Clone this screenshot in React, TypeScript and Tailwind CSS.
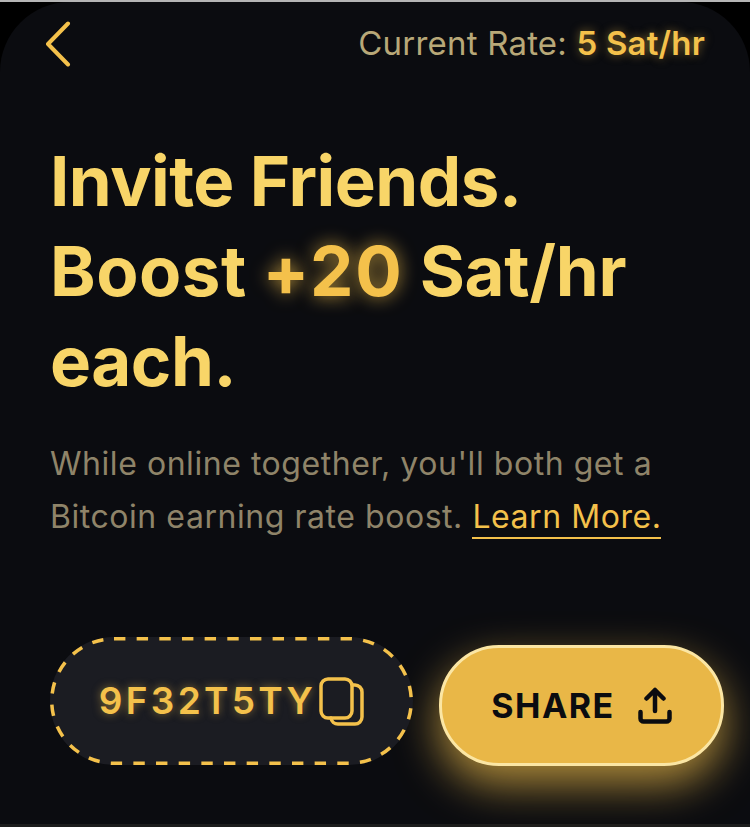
export default function App() {
  return (
    <div className="h-[827px] w-[750px] overflow-hidden bg-black font-['Inter',sans-serif]">
      <div className="h-[2px] bg-[#b5b5b5]" />
      <div className="flex h-[822px] flex-col rounded-t-[70px] bg-[#0b0c10] pl-[50px] pr-[26px]">
        {/* Top bar */}
        <div className="flex h-[84px] items-center justify-between pr-[19px]">
          <svg className="-ml-[5px]" width="26" height="46" viewBox="0 0 26 46" fill="none">
            <path d="M23 2.500 3 23l20 20.500" stroke="#f4c14b" strokeWidth="4" strokeLinecap="round" strokeLinejoin="round" />
          </svg>
          <p className="text-[33px] tracking-[0.2px] text-[#b8a878]">
            Current Rate:{" "}
            <span className="font-semibold text-[#f4c14b] [text-shadow:0_0_10px_rgba(244,193,75,0.5)]">5 Sat/hr</span>
          </p>
        </div>

        {/* Headline */}
        <h1 className="mt-[50px] text-[69px] leading-[90px] font-bold tracking-[-0.5px] text-[#f8d568]">
          Invite Friends.
          <br />
          <span className="tracking-[0.5px]">Boost</span>{" "}
          <span className="tracking-[2px] text-[#f4c14b] [text-shadow:0_0_18px_rgba(244,193,75,0.75)]">+20</span>{" "}
          <span className="tracking-[-0.3px]">Sat/hr</span>
          <br />
          each.
        </h1>

        <p className="mt-[31px] text-[32px] leading-[53px] tracking-[0.55px] text-[#8f8469]">
          While online together, you'll both get a
          <br />
          Bitcoin earning rate boost.{" "}
          <span className="border-b-2 border-[#f4c14b] pb-[1px] text-[#f4c14b]">Learn More.</span>
        </p>

        {/* Actions */}
        <div className="mt-[94px] flex items-start justify-between">
          <div className="relative flex h-[128px] w-[363px] items-center justify-center gap-[3px] rounded-[64px] bg-[#1b1c22]">
            <svg className="absolute inset-0" width="363" height="128" fill="none">
              <rect x="1.750" y="1.750" width="359.500" height="124.500" rx="62.250" stroke="#f4c14b" strokeWidth="3.500" strokeDasharray="11.400 11.260" />
            </svg>
            <span className="text-[37px] font-semibold tracking-[3.300px] text-[#f4c14b] [text-shadow:0_0_8px_rgba(244,193,75,0.5)]">
              9F32T5TY
            </span>
            <svg width="45" height="49" viewBox="0 0 45 49" fill="none" stroke="#f4c14b" strokeWidth="3.500">
              <rect x="2" y="2" width="31" height="39" rx="7" />
              <path d="M34 8h2a7 7 0 0 1 7 7v25a7 7 0 0 1-7 7H19a7 7 0 0 1-7-6" strokeLinecap="round" />
            </svg>
          </div>
          <button className="mt-[8px] flex h-[121px] w-[285px] items-center justify-center gap-[23px] rounded-[60px] border-[3px] border-[#fbe6a4] bg-[#e9b747] shadow-[0_18px_44px_rgba(244,193,75,0.7)]">
            <span className="text-[34px] font-bold tracking-[1.500px] text-[#0b0c10]">SHARE</span>
            <svg width="34" height="37" viewBox="0 0 34 37" fill="none" stroke="#0b0c10" strokeWidth="4.500" strokeLinecap="round" strokeLinejoin="round">
              <path d="M17 24V3M8.500 11.500 17 3l8.500 8.500" />
              <path d="M2.500 25v6.500a3 3 0 0 0 3 3h23a3 3 0 0 0 3-3V25" />
            </svg>
          </button>
        </div>
      </div>
      <div className="h-[3px] bg-[#1c1c1c]" />
    </div>
  );
}
